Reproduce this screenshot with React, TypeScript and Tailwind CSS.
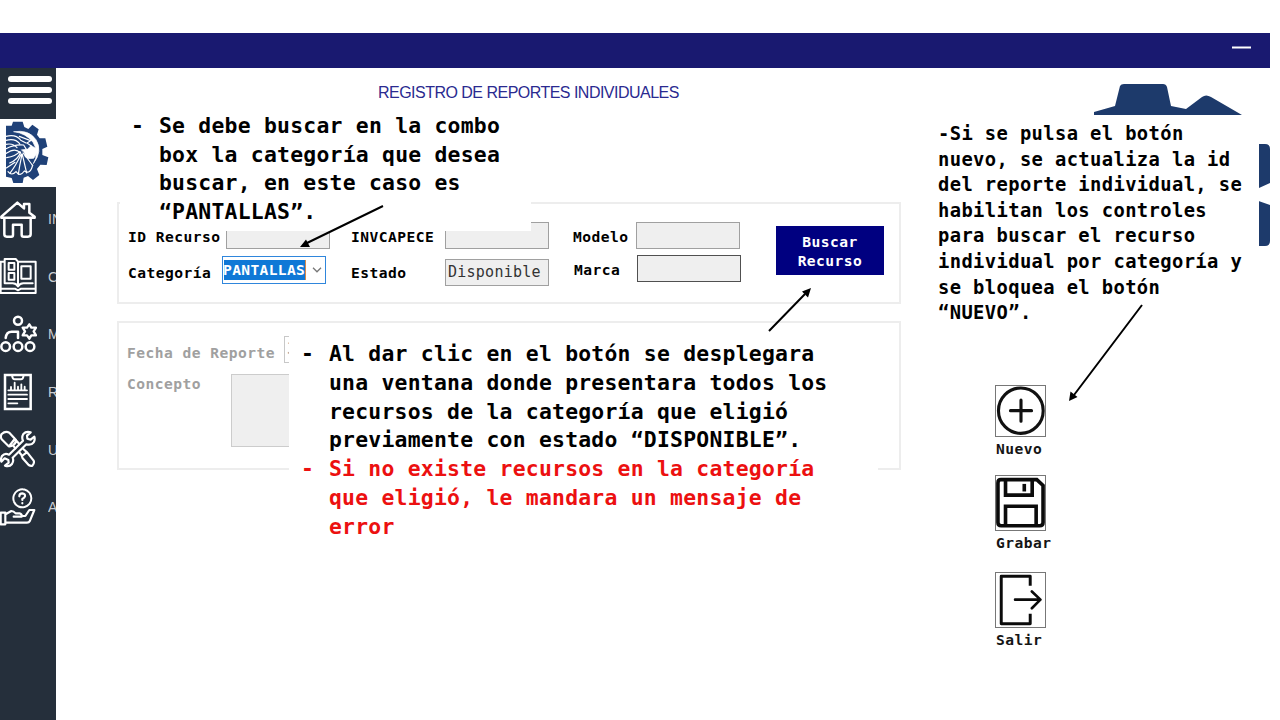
import type { ReactNode } from "react";

const MONO = "font-['DejaVu_Sans_Mono',monospace]";

function Glyph({ viewBox, children }: { viewBox: string; children: ReactNode }) {
  return (
    <svg
      viewBox={viewBox}
      className="h-[38px] w-[37px] shrink-0"
      fill="none"
      stroke="#fff"
      strokeWidth="7.5"
      strokeLinejoin="round"
      strokeLinecap="round"
    >
      {children}
    </svg>
  );
}

const menu: { label: string; icon: ReactNode }[] = [
  {
    label: "INICIO",
    icon: (
      <Glyph viewBox="0 30 111 114">
        <path d="M4 80 52 38 72 55V42H88V68L104 80V83H4Z" />
        <path d="M13 86V133Q13 140 20 140H34Q39 140 39 134V104H65V134Q65 140 71 140H84Q92 140 92 133V86" />
      </Glyph>
    ),
  },
  {
    label: "CATALOGO",
    icon: (
      <Glyph viewBox="0 204 111 114">
        <path d="M2 218V312H107V218H54L47 210H14V218H2M14 218V283M54 220V290M14 283H38Q48 283 54 292Q60 283 70 283H98M4 299H45L54 304 63 299H105" strokeWidth="6" />
        <rect x="26" y="222" width="17" height="20" strokeWidth="6" />
        <rect x="26" y="252" width="17" height="20" strokeWidth="6" />
        <rect x="64" y="232" width="28" height="37" strokeWidth="6" />
      </Glyph>
    ),
  },
  {
    label: "MOVIMIENTOS",
    icon: (
      <Glyph viewBox="0 377 111 114">
        <circle cx="54" cy="394" r="12" />
        <circle cx="17" cy="472" r="13" />
        <circle cx="54" cy="472" r="13" />
        <circle cx="90" cy="472" r="13" />
        <path d="M17 446Q19 427 35 427H54V446M35 427H53" />
        <path d="M88 405 94 415 108 415 101 426 108 438H94L88 448 81 438H68L75 426 68 415H81Z" strokeWidth="7" />
      </Glyph>
    ),
  },
  {
    label: "REPORTES",
    icon: (
      <Glyph viewBox="0 39 111 114">
        <path d="M15 45H92V147H15Z" strokeLinejoin="miter" />
        <path d="M36 46Q38 58 44 58H63Q69 58 71 46" strokeWidth="6" />
        <path d="M25 91H81M25 104H81M25 117H81M25 130H52M33 89V81M44 89V68M54 89V80M64 89V73M74 89V80" strokeWidth="5.5" />
      </Glyph>
    ),
  },
  {
    label: "UTILERIAS",
    icon: (
      <Glyph viewBox="0 211 111 114">
        <g strokeWidth="6.5">
          <path d="M5 223Q16 213 28 219L48 241Q48 251 40 256Q32 262 26 260L5 239Q0 230 5 223ZM48 242 58 253M39 257 46 266M28 259 44 238M70 268 82 279 101 303Q104 311 97 318Q92 320 86 316L68 296 64 285 57 277M70 286 80 278" />
          <path d="M92 218Q78 214 70 223Q64 233 69 243L27 285Q14 279 6 289Q1 299 4 306L14 296 25 301 26 309 15 318Q28 323 36 313Q42 304 38 294L79 254Q94 258 101 248Q106 240 103 231L92 240 82 237 81 228Z" />
        </g>
      </Glyph>
    ),
  },
  {
    label: "AYUDA",
    icon: (
      <Glyph viewBox="0 384 111 114">
        <circle cx="67" cy="415" r="27" strokeWidth="6" strokeDasharray="16 3" />
        <path d="M58 409Q58 400 67 400Q76 401 75 409Q74 413 67 417V420M67 429V430" strokeWidth="6.5" />
        <path d="M2 458H16V493H2ZM18 462 34 453Q41 453 47 460H59Q67 462 65 470H41M66 468H76L88 450H103L89 484Q87 488 81 488H18" strokeWidth="6.5" />
      </Glyph>
    ),
  },
];

function EagleGear() {
  return (
    <svg viewBox="0 177 168 207" className="h-[69px] w-14" fill="none">
      <path
        d="M18 197H35L39 185H68L73 201 85 207 97 194 116 208 111 224 119 235H136L142 260 127 267V285L145 292 140 315 121 314 111 327 118 345 99 360 84 348 71 353 68 369H40L35 354 18 350Z"
        fill="#1f4178"
      />
      <g stroke="#fff" strokeLinecap="round">
        <path d="M42 215Q87 208 108 239Q129 273 100 311Q119 278 99 247Q79 220 42 215Z" fill="#fff" strokeWidth="2" />
        <path d="M18 229Q47 222 61 239M18 241Q46 234 59 251M18 253Q40 249 51 263M18 266Q45 252 71 255L79 268M19 280Q46 261 61 279M58 229 92 242 81 249 95 259M62 241 78 249" strokeWidth="3.5" />
        <path d="M62 276Q54 299 29 309M64 282Q46 319 31 338M66 283Q58 321 55 343M67 283Q74 313 80 339M69 279Q88 302 98 317M20 293Q47 289 59 275M19 324Q35 314 45 307" strokeWidth="3.5" />
        <path d="M65 270Q77 279 75 290L85 296 101 295 111 280V266L93 257 83 267Z" fill="#fff" strokeWidth="2" />
        <path d="M24 335Q35 349 48 335Q60 352 73 333Q91 345 98 315" strokeWidth="3.5" />
      </g>
    </svg>
  );
}

function Label({ children, className = "" }: { children: ReactNode; className?: string }) {
  return (
    <span className={`text-[14.6px] leading-[20px] font-bold tracking-[0.46px] whitespace-nowrap ${className}`}>
      {children}
    </span>
  );
}

function Box({ children, className = "border-[#a0a0a0]" }: { children?: ReactNode; className?: string }) {
  return (
    <div
      className={`flex h-[27px] w-[104px] shrink-0 items-center border bg-[#efefef] pl-[2px] text-[15px] tracking-[0.25px] text-[#333] ${className}`}
    >
      {children}
    </div>
  );
}

function Action({ label, className, children }: { label: string; className: string; children: ReactNode }) {
  return (
    <div className="flex flex-col items-start">
      <div className={`w-[51px] border border-[#777] ${className}`}>{children}</div>
      <span className="mt-[2px] h-[21px] pl-px text-[14.6px] leading-[20px] font-bold tracking-[0.46px] text-[#151515]">
        {label}
      </span>
    </div>
  );
}

function Note({ lines, className = "" }: { lines: string[]; className?: string }) {
  return (
    <li className={`flex ${className}`}>
      <span className="w-[28px] shrink-0">-</span>
      <span>
        {lines.map((l) => (
          <span key={l} className="block whitespace-nowrap">
            {l}
          </span>
        ))}
      </span>
    </li>
  );
}

export default function App() {
  return (
    <div className={`relative flex h-[720px] w-[1280px] flex-col overflow-hidden bg-white pt-[33px] text-black ${MONO}`}>
      <header className="flex h-[35px] w-[1270px] shrink-0 justify-end bg-[#191970] pt-[13px] pr-[19px]">
        <span className="h-[3px] w-[19px] border-y border-[#8c8cb8] bg-white" />
      </header>

      <div className="flex min-h-0 flex-1">
        <aside className="flex w-14 shrink-0 flex-col overflow-hidden bg-[#252f3b]">
          <div className="flex h-[51px] shrink-0 flex-col gap-[5px] pt-[8px] pl-[8px]">
            <span className="h-[6px] w-[44px] rounded-full bg-white" />
            <span className="h-[6px] w-[44px] rounded-full bg-white" />
            <span className="h-[6px] w-[44px] rounded-full bg-white" />
          </div>
          <div className="h-[68px] shrink-0 bg-white">
            <EagleGear />
          </div>
          <nav className="flex flex-col pt-[3px]">
            {menu.map((m) => (
              <div key={m.label} className="flex h-[57.6px] items-center">
                {m.icon}
                <span className="mt-[2px] ml-[11px] w-[8px] shrink-0 overflow-hidden font-['Liberation_Sans',sans-serif] text-[14px] whitespace-nowrap text-[#c9cdd2]">
                  {m.label}
                </span>
              </div>
            ))}
          </nav>
        </aside>

        <main className="flex flex-1">
          <div className="w-[845px] shrink-0 pt-[15px] pl-[61px]">
            <h1 className="pl-[261px] font-['Liberation_Sans',sans-serif] text-[16px] leading-[20px] tracking-[-0.52px] whitespace-nowrap text-[#2a2a90]">
              REGISTRO DE REPORTES INDIVIDUALES
            </h1>

            <section className="mt-[99px] flex h-[102px] w-[784px] border-2 border-[#ededed]">
              <div className="w-[211px] pl-[9px]">
                <div className="flex pt-[18px]">
                  <Label className="w-[99px] pt-[5px]">ID Recurso</Label>
                  <Box className="ml-px w-[103px] border-[#a0a0a0]" />
                </div>
                <div className="flex pt-[7px]">
                  <Label className="w-[94px] pt-[7px]">Categoría</Label>
                  <div className="flex h-[28px] w-[104px] items-center border border-[#2f86dc] bg-white pl-px">
                    <span className="flex h-[20px] w-[82px] items-center overflow-hidden border-r border-[#d98a4a] bg-[#0f78d6] text-[14.6px] font-bold tracking-[0.35px] text-white">
                      <span className="-ml-[1px]">PANTALLAS</span>
                    </span>
                    <svg viewBox="0 0 10 6" className="ml-[6px] h-[6px] w-[10px]" fill="none" stroke="#777" strokeWidth="1.3">
                      <path d="m1 .8 4 4 4-4" />
                    </svg>
                  </div>
                </div>
              </div>
              <div className="ml-[21px] w-[198px]">
                <div className="flex pt-[18px]">
                  <Label className="w-[94px] pt-[5px]">INVCAPECE</Label>
                  <Box />
                </div>
                <div className="flex pt-[10px]">
                  <Label className="w-[94px] pt-[4px]">Estado</Label>
                  <Box>Disponible</Box>
                </div>
              </div>
              <div className="ml-[24px] w-[169px]">
                <div className="flex pt-[18px]">
                  <Label className="w-[63px] pt-[5px]">Modelo</Label>
                  <Box />
                </div>
                <div className="flex pt-[6px] pl-[1px]">
                  <Label className="w-[63px] pt-[5px]">Marca</Label>
                  <Box className="border-[#505050]" />
                </div>
              </div>
              <button className="mt-[22px] ml-[34px] h-[49px] w-[108px] bg-[#000080] pt-px text-center text-[14.6px] leading-[19.5px] font-bold tracking-[0.46px] text-white">
                Buscar
                <br />
                Recurso
              </button>
            </section>

            <section className="mt-[17px] h-[149px] w-[784px] border-2 border-[#ededed] pl-[8px] text-[#a0a0a0]">
              <div className="flex pt-[13px]">
                <Label className="w-[157px] pt-[7px]">Fecha de Reporte</Label>
                <div className="h-[27px] w-[104px] border border-[#c8c8c8] pl-[2px] text-[15.4px] leading-[25px]">31/05/2022</div>
              </div>
              <div className="flex pt-[11px]">
                <Label className="w-[104px]">Concepto</Label>
                <div className="h-[73px] w-[300px] border border-[#ccc] bg-[#efefef]" />
              </div>
            </section>
          </div>

          <div className="flex flex-col pt-[317px] pl-[94px]">
            <Action label="Nuevo" className="h-[52px]">
              <svg viewBox="78 47 147 152" className="h-full w-full" fill="none" stroke="#111" strokeWidth="9.5" strokeLinecap="round">
                <ellipse cx="152.500" cy="122" rx="68" ry="69" />
                <path d="M121 122H185M153 90V154" />
              </svg>
            </Action>
            <div className="h-[15px]" />
            <Action label="Grabar" className="h-[56px]">
              <svg viewBox="78 315 147 164" className="h-full w-full" fill="none" stroke="#0b0b0b" strokeWidth="11">
                <path d="M92 326H201L220 344V456Q220 466 210 466H93Q83 466 83 456V336Q83 326 92 326Z" />
                <path d="M106 328V373H187V328M106 464V407H199V464" />
                <path d="M163 339V362" strokeWidth="11" />
              </svg>
            </Action>
            <div className="h-[18px]" />
            <Action label="Salir" className="h-[56px]">
              <svg viewBox="78 607 147 164" className="h-full w-full" fill="none" stroke="#0b0b0b" strokeWidth="9" strokeLinejoin="round">
                <path d="M181 646V617H93V761H181V731" />
                <path d="M135 688H210M186 663 212 688 186 714" strokeWidth="8" strokeLinecap="round" />
              </svg>
            </Action>
          </div>
        </main>
      </div>

      <svg viewBox="1090 80 180 170" className="absolute top-[80px] left-[1090px] h-[170px] w-[180px]" fill="#1d3a6b">
        <path d="M1094 115V112L1115 106 1120 86Q1121 84 1124 84H1163Q1166 84 1167 87L1171 106 1186 109 1202 97Q1206 94 1211 97L1242 115Z" />
        <path d="M1250 144H1265Q1270 144 1270 149V183L1259 188 1250 190ZM1250 198 1270 205V241Q1270 246 1265 246H1250Z" />
      </svg>

      <ul className="absolute top-[110px] left-[120px] h-[121px] w-[411px] bg-white pt-[2px] pl-[11px] text-[21.4px] leading-[28.7px] font-bold tracking-[0.24px]">
        <Note lines={["Se debe buscar en la combo", "box la categoría que desea", "buscar, en este caso es", "“PANTALLAS”."]} />
      </ul>

      <ul className="absolute top-[336px] left-[289px] h-[208px] w-[589px] bg-white pt-[4px] pl-[12px] text-[21.4px] leading-[28.75px] font-bold tracking-[0.24px]">
        <Note
          lines={[
            "Al dar clic en el botón se desplegara",
            "una ventana donde presentara todos los",
            "recursos de la categoría que eligió",
            "previamente con estado “DISPONIBLE”.",
          ]}
        />
        <Note
          className="text-[#ec1010]"
          lines={["Si no existe recursos en la categoría", "que eligió, le mandara un mensaje de", "error"]}
        />
      </ul>

      <p className="absolute top-[115px] left-[924px] h-[216px] w-[335px] bg-white pt-[6px] pl-[14px] text-[18.8px] leading-[25.6px] font-bold tracking-[0.39px] whitespace-pre">
        {"-Si se pulsa el botón\nnuevo, se actualiza la id\ndel reporte individual, se\nhabilitan los controles\npara buscar el recurso\nindividual por categoría y\nse bloquea el botón\n“NUEVO”."}
      </p>

      <svg viewBox="0 0 1280 720" className="pointer-events-none absolute inset-0 h-full w-full" stroke="#000" strokeWidth="2">
        <path d="M383 206 307 243M769 331 805 294M1142 305 1074 395" />
        <path d="M300 247 306 239.500 310 247ZM811 288 808 297.500 802 291.500ZM1069 401 1070.500 391.500 1077.500 397Z" stroke="none" />
      </svg>
    </div>
  );
}
